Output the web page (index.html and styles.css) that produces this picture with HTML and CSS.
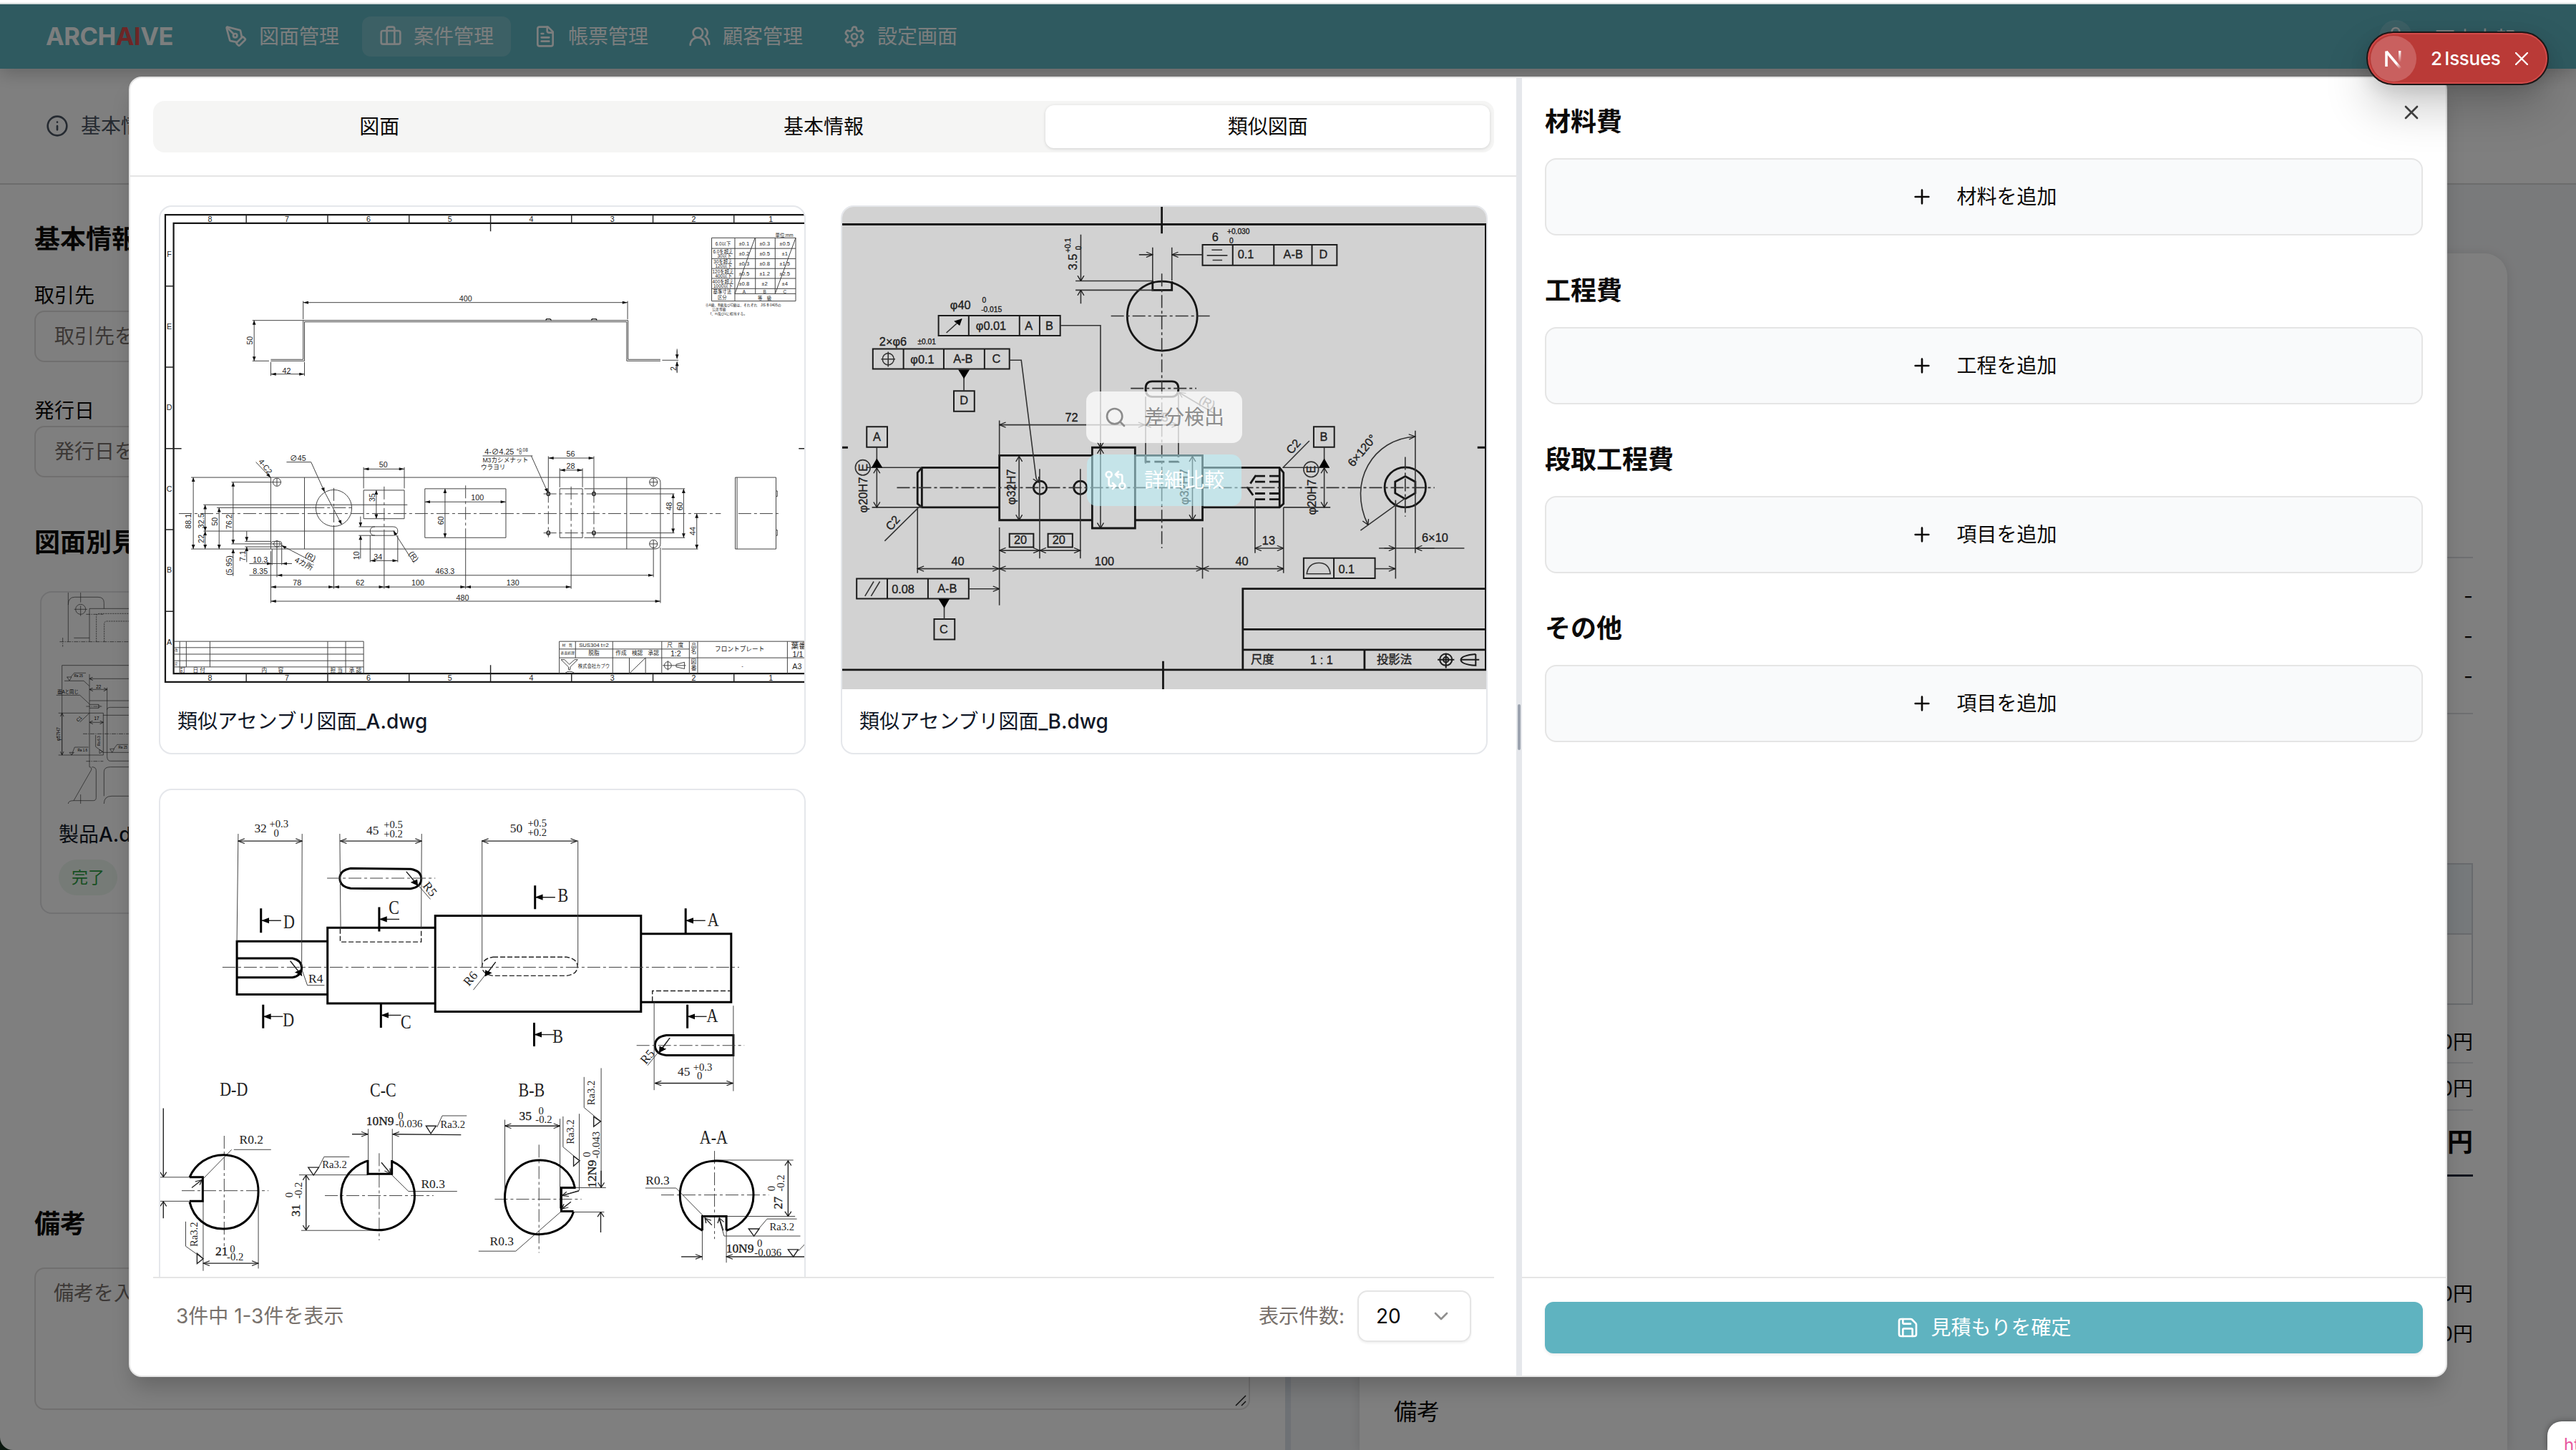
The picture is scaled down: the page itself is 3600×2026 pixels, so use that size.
FILE: index.html
```html
<!DOCTYPE html>
<html lang="ja">
<head>
<meta charset="utf-8">
<title>ARCHAIVE</title>
<link rel="stylesheet" href="styles.css">
</head>
<body>
<svg class="defs" width="0" height="0">
  <defs>
    <marker id="solid" viewBox="0 0 12 8" refX="12" refY="4" markerWidth="13" markerHeight="8" markerUnits="userSpaceOnUse" orient="auto-start-reverse"><path d="M0 0L12 4L0 8z" fill="#111"/></marker>
    <marker id="open" viewBox="0 0 14 14" refX="13" refY="7" markerWidth="17" markerHeight="17" markerUnits="userSpaceOnUse" orient="auto-start-reverse"><path d="M1 1L13 7L1 13" fill="none" stroke="#1a1a1a" stroke-width="1.8"/></marker>
    <marker id="block" viewBox="0 0 14 14" refX="13" refY="7" markerWidth="18" markerHeight="20" markerUnits="userSpaceOnUse" orient="auto-start-reverse"><path d="M0 0L14 7L0 14z" fill="#000"/></marker>
    <linearGradient id="fade" x1="0" y1="0" x2="0" y2="1"><stop offset="0" stop-color="#fff"/><stop offset="1" stop-color="#fff" stop-opacity="0"/></linearGradient>
    <linearGradient id="fade2" gradientUnits="userSpaceOnUse" x1="8" y1="4" x2="28" y2="28"><stop offset=".7" stop-color="#fff"/><stop offset="1" stop-color="#fff" stop-opacity="0"/></linearGradient>
  </defs>
</svg>

<div class="page">
  <header class="nav">
    <div class="logo">ARCH<span>AI</span>VE</div>
    <nav class="menu">
      <a class="menu-item"><svg class="icon" viewBox="0 0 24 24"><path d="M15.707 21.293a1 1 0 0 1-1.414 0l-1.586-1.586a1 1 0 0 1 0-1.414l5.586-5.586a1 1 0 0 1 1.414 0l1.586 1.586a1 1 0 0 1 0 1.414z"/><path d="m18 13-1.375-6.874a1 1 0 0 0-.746-.776L3.235 2.028a1 1 0 0 0-1.207 1.207L5.35 15.879a1 1 0 0 0 .776.746L13 18"/><path d="m2.3 2.3 7.286 7.286"/><circle cx="11" cy="11" r="2"/></svg>図面管理</a>
      <a class="menu-item active"><svg class="icon" viewBox="0 0 24 24"><path d="M16 20V4a2 2 0 0 0-2-2h-4a2 2 0 0 0-2 2v16"/><rect width="20" height="14" x="2" y="6" rx="2"/></svg>案件管理</a>
      <a class="menu-item"><svg class="icon" viewBox="0 0 24 24"><path d="M15 2H6a2 2 0 0 0-2 2v16a2 2 0 0 0 2 2h12a2 2 0 0 0 2-2V7Z"/><path d="M14 2v4a2 2 0 0 0 2 2h4M10 9H8M16 13H8M16 17H8"/></svg>帳票管理</a>
      <a class="menu-item"><svg class="icon" viewBox="0 0 24 24"><path d="M18 21a8 8 0 0 0-16 0"/><circle cx="10" cy="8" r="5"/><path d="M22 20c0-3.370-2-6.500-4-8a5 5 0 0 0-.450-8.300"/></svg>顧客管理</a>
      <a class="menu-item"><svg class="icon" viewBox="0 0 24 24"><path d="M12.220 2h-.440a2 2 0 0 0-2 2v.180a2 2 0 0 1-1 1.730l-.430.250a2 2 0 0 1-2 0l-.150-.080a2 2 0 0 0-2.730.730l-.220.380a2 2 0 0 0 .730 2.730l.150.100a2 2 0 0 1 1 1.720v.510a2 2 0 0 1-1 1.740l-.150.090a2 2 0 0 0-.730 2.730l.220.380a2 2 0 0 0 2.730.730l.150-.080a2 2 0 0 1 2 0l.430.250a2 2 0 0 1 1 1.730V20a2 2 0 0 0 2 2h.440a2 2 0 0 0 2-2v-.180a2 2 0 0 1 1-1.730l.430-.250a2 2 0 0 1 2 0l.150.080a2 2 0 0 0 2.730-.730l.220-.390a2 2 0 0 0-.730-2.730l-.150-.080a2 2 0 0 1-1-1.740v-.500a2 2 0 0 1 1-1.740l.150-.090a2 2 0 0 0 .730-2.730l-.220-.380a2 2 0 0 0-2.730-.730l-.150.080a2 2 0 0 1-2 0l-.430-.250a2 2 0 0 1-1-1.730V4a2 2 0 0 0-2-2z"/><circle cx="12" cy="12" r="3"/></svg>設定画面</a>
    </nav>
    <div class="user"><span class="avatar"><svg class="icon" viewBox="0 0 24 24"><path d="M19 21v-2a4 4 0 0 0-4-4H9a4 4 0 0 0-4 4v2"/><circle cx="12" cy="7" r="4"/></svg></span><span class="user-name">西山太郎</span></div>
  </header>
  <div class="subnav"><svg class="icon" viewBox="0 0 24 24"><circle cx="12" cy="12" r="10"/><path d="M12 16v-4M12 8h.01"/></svg>基本情報</div>
  <div class="work">
    <section class="form">
      <h2>基本情報</h2>
      <label>取引先</label>
      <div class="input">取引先を</div>
      <label class="second">発行日</label>
      <div class="input">発行日を</div>
      <h2 class="per">図面別見積</h2>
      <article class="part">
        <svg class="part-draw" viewBox="51 39 420 885">
          <path d="M163 39V245M163 90Q163 58 190 58H288Q313 58 313 82V106M215 39V80M215 94V137M188 109H243M252 245V106H430M187 229H252M137 344V720M137 344H430M252 381V770M252 492H430M122 544H310V720H122M310 553H430M326 437V725Q326 745 340 745H430M326 530Q326 520 340 520H430M147 409H228L252 431M113 469H212L252 506M212 582L252 544M177 720L190 687H248M158 393H177L168 408zM160 393H158M174 393L188 376H237M168 709H187L177 720zM338 694H356L347 709zM354 694L368 676H413M310 709H430M278 636V685L310 709M294 697V713L308 706zM252 508H290V523H252M290 508L298 516L290 523M252 770Q262 770 260 782L186 911H268Q280 911 280 898V785Q280 770 262 770M163 924Q163 911 186 911M215 885V924M313 924Q313 892 345 892H430M313 892V790Q313 770 340 770H430" class="hair"/>
          <circle cx="215" cy="109" r="21" class="hair"/>
          <path d="M127 245H430M140 228V266M225 631H430M238 516H304M238 746H310M238 130H310" class="hair dash-c"/>
          <path d="M281 245V140Q281 127 294 127H430M314 245V170Q314 159 326 159H430" class="hair dash"/>
          <g class="hair" marker-start="url(#open)" marker-end="url(#open)"><path d="M137 544V720"/><path d="M252 445H326"/><path d="M252 583H310"/></g>
          <path d="M430 400H252" class="hair" marker-end="url(#open)"/>
          <g class="part-text"><text x="290" y="432">22</text><text x="282" y="566">17</text><text x="162" y="455">面Aと同じ</text><text class="tiny" x="206" y="389">Ra 25</text><text class="tiny" x="223" y="699">Ra 1.6</text><text class="tiny" x="392" y="688">Ra 25</text><text class="turn" x="121" y="630">φ57H7</text><text class="turn tiny" x="293" y="660">Ra 6.3</text><text class="lean" x="208" y="567">C1</text></g>
        </svg>
        <div class="part-name">製品<b>A.dwg</b></div>
        <span class="badge">完了</span>
      </article>
      <h2 class="memo">備考</h2>
      <div class="textarea">備考を入<svg viewBox="0 0 16 16"><path d="M1 15L15 1M9 15L15 9"/></svg></div>
    </section>
    <div class="splitter"></div>
    <section class="preview">
      <div class="sheet">
        <div class="dashes"><span>-</span><span>-</span><span>-</span></div>
        <div class="grid-table"><div></div><div></div></div>
        <div class="sum">0円</div>
        <div class="sum">0円</div>
        <div class="sum total">0円</div>
        <div class="extra"><span>0円</span><span>0円</span></div>
        <div class="sheet-memo">備考</div>
      </div>
    </section>
  </div>
</div>

<div class="veil"></div>

<div class="dialog">
  <section class="left">
    <div class="tab-head">
      <div class="tabs"><div class="tab">図面</div><div class="tab">基本情報</div><div class="tab on">類似図面</div></div>
    </div>
    <div class="scroll">
      <div class="cards">
        <article class="card">
          <svg class="draw wide" viewBox="39.6 37 1471 1321" preserveAspectRatio="none">
            <path class="bold" d="M1520 59H51V1338H1520M1520 82H70V1315H1520"/>
            <path class="mid" d="M236 59V82M422 59V82M608 59V82M794 59V104M979 59V82M1165 59V82M1350 59V82M236 1315V1338M422 1315V1338M608 1315V1338M794 1292V1338M979 1315V1338M1165 1315V1338M1350 1315V1338M51 254H70M51 476H70M51 699H88M51 921H70M51 1145H70M1498 699H1520"/>
            <path class="thin" d="M1299 122H1491V295H1299zM1299 151H1491M1299 179H1491M1299 206H1491M1299 233H1491M1299 261H1491M1352 275H1491M1352 122V295M1399 122V275M1444 122V275M1398 122L1352 275M1491 122L1444 275"/>
            <path class="thin" d="M292 455H366V348H1108V455H1182M292 459H369V352H1105V459H1182"/>
            <path class="mid" d="M920 348L922 344H930L933 348M1024 348L1026 344H1035L1037 348"/>
            <path class="thin" d="M366 345V295M1107 345V295M250 348H366M250 459H288M292 462V500M369 462V500M1186 457H1223M1220 426V452M1220 492V462M110 778H1168Q1182 778 1182 792V960Q1182 974 1168 974H292V778M369 778V974M1105 778V974M504 813H597V891H504zM644 809H829V943H644zM952 809H1004V943H952zM530 913H571Q582 913 582 925Q582 937 571 937H530Q519 937 519 925Q519 913 530 913zM504 808V750M597 808V750M138 853H604M169 861H385M138 925H576M202 791H298M110 974H292M202 960H298M233 953H292M233 968H292M295 974V1018M317 960V1018M292 980V1122M306 968V1051M436 915V1083M551 940V1083M737 945V1083M978 945V1083M1166 968V1051M1182 970V1122M519 937V1010M582 937V1010M493 913H530M493 937H530M926 818V720M1030 818V720M952 805V753M1004 805V753M1036 823H1214M1036 930H1214M1008 809H1238M1008 943H1238M1185 974H1268M1353 778H1446V974H1353zM1357 778V974M1446 815H1449V830H1446M1446 922H1449V937H1446M328 736H384M776 719H890M243 1046H306M243 1014H340M292 960Q292 953 300 953H312Q317 953 317 960Q317 968 312 968H292"/>
            <path class="thin dash-c" d="M82 877H1320M1360 877H1455M385 861H482M436 807V915M551 803V940M737 800V943M978 803V943M926 812V942M1030 812V942M915 823H1036M915 930H1036M297 791H316M297 960H316M1157 791H1176M1157 960H1176M1166 781V801M1166 950V970M306 781V801M306 950V970"/>
            <ellipse class="thin" cx="436" cy="862" rx="41" ry="50"/>
            <g class="thin"><ellipse cx="306" cy="791" rx="9" ry="11"/><ellipse cx="306" cy="960" rx="7" ry="8"/><ellipse cx="1166" cy="791" rx="9" ry="11"/><ellipse cx="1166" cy="960" rx="9" ry="11"/></g>
            <g class="mid"><ellipse cx="926" cy="823" rx="3.5" ry="5"/><ellipse cx="1030" cy="823" rx="3.5" ry="5"/><ellipse cx="926" cy="930" rx="3.5" ry="5"/><ellipse cx="1030" cy="930" rx="3.5" ry="5"/></g>
            <g class="thin" marker-start="url(#solid)" marker-end="url(#solid)"><path d="M366 299H1107"/><path d="M254 348V459"/><path d="M292 495H369"/><path d="M504 755H597"/><path d="M926 725H1030"/><path d="M952 758H1004"/><path d="M115 778V974"/><path d="M142 853V925"/><path d="M142 925V974"/><path d="M174 861V974"/><path d="M206 791V960"/><path d="M533 813V891"/><path d="M644 845H829"/><path d="M690 809V943"/><path d="M519 1006H582"/><path d="M306 1046H1166"/><path d="M292 1078H436"/><path d="M436 1078H551"/><path d="M551 1078H737"/><path d="M737 1078H978"/><path d="M292 1117H1182"/><path d="M1211 823V930"/><path d="M1235 809V943"/><path d="M1265 877V974"/></g>
            <g class="thin" marker-end="url(#solid)"><path d="M384 736L415 818"/><path d="M415 818L454 907"/><path d="M887 719L925 820"/><path d="M258 736L292 779"/><path d="M390 1010L316 964"/><path d="M619 1012L572 924"/><path d="M497 885V913"/><path d="M497 1000V937"/><path d="M237 925V953"/><path d="M237 1010V968"/><path d="M206 1048V974"/><path d="M280 1014H295"/><path d="M340 1014H317"/><path d="M1220 430V453"/><path d="M1220 490V461"/></g>
            <path class="thin" d="M70 1227H504V1315M70 1244H504M70 1262H504M70 1280H504M70 1297H504M84 1227V1315M99 1227V1297M153 1227V1297M422 1227V1315M463 1227V1315"/>
            <path class="thin" d="M1520 1227H951V1315M951 1248H1248M951 1272H1520M988 1227V1272M1073 1227V1315M1111 1272V1315M1148 1272V1315M1185 1227V1315M1248 1227V1315M1267 1227V1315M1472 1227V1315M1111 1315L1148 1272M1187 1293H1240M1199 1280V1306M1218 1290L1237 1284V1302L1218 1297z"/>
            <ellipse class="thin" cx="1199" cy="1293" rx="8" ry="10"/>
            <path class="thin" d="M955 1277L963 1277L974 1290L986 1277H993L976 1297V1304H972V1297zM964 1314Q974 1304 986 1314"/>
            <g class="lbl">
              <text x="153" y="70">8</text><text x="329" y="70">7</text><text x="515" y="70">6</text><text x="701" y="70">5</text><text x="887" y="70">4</text><text x="1072" y="70">3</text><text x="1258" y="70">2</text><text x="1434" y="70">1</text>
              <text x="153" y="1326">8</text><text x="329" y="1326">7</text><text x="515" y="1326">6</text><text x="701" y="1326">5</text><text x="887" y="1326">4</text><text x="1072" y="1326">3</text><text x="1258" y="1326">2</text><text x="1434" y="1326">1</text>
              <text x="60" y="166">F</text><text x="60" y="364">E</text><text x="60" y="586">D</text><text x="60" y="809">C</text><text x="60" y="1031">B</text><text x="60" y="1229">A</text>
              <text x="737" y="288">400</text><text x="328" y="485">42</text><text x="549" y="743">50</text><text x="977" y="714">56</text><text x="977" y="747">28</text><text x="764" y="833">100</text><text x="354" y="724">∅45</text><text x="814" y="707">4-∅4.25</text><text x="537" y="996">34</text><text x="268" y="1003">10.3</text><text x="268" y="1034">8.35</text><text x="690" y="1034">463.3</text><text x="352" y="1066">78</text><text x="496" y="1066">62</text><text x="628" y="1066">100</text><text x="845" y="1066">130</text><text x="730" y="1107">480</text>
              <text class="name" x="828" y="731">M3カシメナット</text><text class="name" x="800" y="751">ウラヨリ</text>
              <g class="v"><text x="244" y="403">50</text><text x="1211" y="480">2</text><text x="104" y="898">88.1</text><text x="132" y="897">32.5</text><text x="132" y="946">22</text><text x="164" y="899">50</text><text x="196" y="899">76.2</text><text x="523" y="833">35</text><text x="680" y="896">60</text><text x="1201" y="857">48</text><text x="1226" y="857">60</text><text x="1255" y="925">44</text><text x="487" y="992">10</text><text x="228" y="993">7.1</text><text x="196" y="1019">(5.95)</text></g>
              <text class="tilt" x="280" y="748">4-C2</text><text class="tilt2" x="368" y="1014">4カ所</text><text class="tilt2" x="383" y="994">(R)</text><text class="tilt" x="619" y="994">(R)</text>
            </g>
            <g class="sml">
              <text x="866" y="702">+0.08</text><text x="862" y="711">0</text>
              <text x="1465" y="114">単位:mm</text><text x="1325" y="138">6.0以下</text><text x="1325" y="160">6.0を超え</text><text x="1328" y="172">30以下</text><text x="1325" y="187">30を超え</text><text x="1326" y="199">120以下</text><text x="1325" y="214">120を超え</text><text x="1326" y="226">400以下</text><text x="1325" y="241">400を超え</text><text x="1325" y="254">1000以下</text><text x="1323" y="269">基準寸法</text><text x="1323" y="284">区分</text><text x="1373" y="269">A</text><text x="1420" y="269">B</text><text x="1466" y="269">C</text><text x="1420" y="286">等　級</text>
            </g>
            <g class="med">
              <text x="1373" y="138">±0.1</text><text x="1420" y="138">±0.3</text><text x="1466" y="138">±0.5</text><text x="1373" y="166">±0.2</text><text x="1420" y="166">±0.5</text><text x="1466" y="166">±1</text><text x="1373" y="192">±0.3</text><text x="1420" y="192">±0.8</text><text x="1466" y="192">±1.5</text><text x="1373" y="220">±0.5</text><text x="1420" y="220">±1.2</text><text x="1466" y="220">±2.5</text><text x="1373" y="247">±0.8</text><text x="1420" y="247">±2</text><text x="1466" y="247">±4</text>
              <text x="128" y="1307">日 付</text><text x="296" y="1307">内　　容</text><text x="442" y="1307">担 当</text><text x="485" y="1307">承 認</text><text x="91" y="1307">訂</text>
              <text x="1030" y="1238">SUS304 t=2</text><text x="1030" y="1260">脱脂</text><text x="1092" y="1260">作成</text><text x="1129" y="1260">検認</text><text x="1166" y="1260">承認</text><text x="1216" y="1238">尺　度</text><text class="firm" x="1030" y="1295">株式会社カブウ</text><text x="1258" y="1239">品</text><text x="1258" y="1256">名</text><text x="1258" y="1283">図</text><text x="1258" y="1301">番</text><text x="1369" y="1294">-</text>
            </g>
            <g class="tin"><text x="1371" y="307">※A級、B級及びC級は、それぞれ　JIS B 0405の</text><text x="1316" y="319">公差等級</text><text x="1338" y="330">f、m及びcに相当する。</text><text x="969" y="1238">材　質</text><text x="970" y="1260">表面処理</text><text x="76" y="1252">改</text><text x="76" y="1289">定</text></g>
            <g class="lbl"><text x="1217" y="1260">1:2</text><text class="name" x="1363" y="1248">フロントプレート</text><text x="1498" y="1239">葉番</text><text x="1496" y="1261">1/1</text><text x="1494" y="1295">A3</text></g>
          </svg>
          <div class="caption">類似アセンブリ図面<b>_A.dwg</b></div>
        </article>

        <article class="card hover">
          <svg class="draw wide blur" viewBox="27 37 1471 1321" preserveAspectRatio="none">
            <path class="bold" d="M20 85H1497V1305H20M757 30V110M760 1281V1370M20 696H40M1478 696H1498M1500 1083H942V1305M942 1194H1500M942 1250H1500M1220 1250V1305"/>
            <ellipse class="bold" cx="758" cy="336" rx="80" ry="95"/>
            <path class="bold" d="M736 241V265H780V241M386 751H209L199 765V850L209 860H386M209 751V860M386 718H598V895H386zM598 696H696V917H598zM696 718H850V895H696M850 751H1026L1035 765V850L1026 860H850M1026 751V860M735 515H780Q795 515 795 535Q795 557 780 557H735Q720 557 720 535Q720 515 735 515z"/>
            <path class="frame" d="M850 141H1157V197H850zM919 141V197M1013 141V197M1100 141V197M247 335H525V390H247zM316 335V390M432 335V390M478 335V390M97 426H409V481H97zM167 426V481M259 426V481M352 426V481M60 1055H316V1110H60zM130 1055V1110M223 1055V1110M1081 999H1244V1054H1081zM1150 999V1054M282 541H329V597H282zM83 639H130V695H83zM1104 639H1151V695H1104zM237 1166H284V1222H237zM409 932H464V969H409zM497 932H553V969H497z"/>
            <g class="bold"><ellipse cx="479" cy="806" rx="15" ry="18"/><ellipse cx="571" cy="806" rx="15" ry="18"/><ellipse cx="1313" cy="805" rx="47" ry="55"/></g>
            <path class="bold" d="M1313 775L1336 790V821L1313 837L1290 821V790z"/>
            <path class="bold seg" d="M970 774H1035M970 790H1035M970 822H1035M970 838H1035M972 772L953 806L972 838M720 720V735H795V720"/>
            <path class="thin g" d="M736 239V148M780 239V148M560 240H738M560 265H738M525 362H617V696M409 457H436L470 780M305 505V540M106 695V730M1128 695V730M260 1130V1166M83 751H209M95 860H209M1035 751H1140M1035 860H1142M199 860V1040M386 622V718M386 915V1128M478 755V1000M571 755V1000M850 915V1055M1035 860V1040M970 840V985M720 557V740M795 545V720M1336 650V985M1291 840V1055M124 952L206 855M1094 678L1033 752M1253 972H1448M860 170H907M871 155H895M873 183H895M1088 1042Q1092 1012 1116 1012Q1139 1012 1142 1042zM79 1103L99 1063M93 1103L113 1063M1211 923L1313 835M116 454H148M132 434V475"/>
            <g class="thin g"><ellipse cx="132" cy="454" rx="13" ry="16"/><ellipse cx="74" cy="751" rx="17" ry="21"/><ellipse cx="1098" cy="756" rx="17" ry="21"/></g>
            <path class="thin g dash-c" d="M641 336H868M757 220V972M686 534H836M152 806H1380M1313 722V885"/>
            <g class="thin g" marker-start="url(#open)" marker-end="url(#open)"><path d="M386 634H718"/><path d="M718 634H794"/><path d="M386 978H478"/><path d="M478 978H571"/><path d="M199 1028H385"/><path d="M386 1028H850"/><path d="M850 1028H1035"/><path d="M970 972H1035"/><path d="M431 720V895"/><path d="M617 698V917"/><path d="M827 720V895"/><path d="M106 752V860"/><path d="M1128 752V860"/><path d="M1336 666C1240 672 1180 790 1228 908"/></g>
            <g class="thin g" marker-end="url(#open)"><path d="M705 168H736"/><path d="M850 168H780"/><path d="M572 113V240"/><path d="M572 302V265"/><path d="M316 1083H386"/><path d="M1244 1028H1290"/><path d="M1265 972H1290"/><path d="M1380 972H1337"/><path d="M880 605L796 545"/><path d="M470 780L476 792"/><path d="M617 600V696"/></g>
            <path class="thin g" d="M265 382L300 344" marker-end="url(#block)"/>
            <path class="fill" d="M292 483H318L305 508zM94 751L106 726L119 751zM1116 751L1128 726L1140 751zM247 1111H272L260 1136z"/>
            <path class="frame" d="M1387 1277H1425M1406 1260V1300M1440 1277H1482M1474 1262V1293Q1440 1290 1440 1277Q1442 1265 1474 1262"/>
            <g class="frame"><ellipse cx="1406" cy="1277" rx="14" ry="16"/><ellipse cx="1406" cy="1277" rx="6" ry="7"/></g>
            <g class="lb2">
              <text x="879" y="120">6</text><text x="949" y="167">0.1</text><text x="1057" y="167">A-B</text><text x="1126" y="167">D</text><text x="297" y="305">φ40</text><text x="367" y="363">φ0.01</text><text x="453" y="362">A</text><text x="500" y="362">B</text><text x="143" y="405">2×φ6</text><text x="210" y="454">φ0.1</text><text x="303" y="453">A-B</text><text x="379" y="453">C</text><text x="305" y="567">D</text><text x="106" y="667">A</text><text x="1127" y="667">B</text><text x="551" y="614">72</text><text x="757" y="614">15</text><text x="434" y="948">20</text><text x="522" y="948">20</text><text x="291" y="1007">40</text><text x="626" y="1007">100</text><text x="940" y="1007">40</text><text x="1001" y="951">13</text><text x="1381" y="943">6×10</text><text x="1179" y="1028">0.1</text><text x="166" y="1084">0.08</text><text x="267" y="1082">A-B</text><text x="259" y="1194">C</text><text x="987" y="1276">尺度</text><text x="1122" y="1278">1 : 1</text><text x="1288" y="1276">投影法</text>
              <g class="v"><text x="554" y="188">3.5</text><text x="412" y="804">φ32H7</text><text x="808" y="804">φ32H7</text><text x="74" y="826">φ20H7</text><text x="74" y="751">E</text><text x="1098" y="756">E</text><text x="1100" y="832">φ20H7</text></g>
              <text class="up" x="142" y="902">C2</text><text class="up" x="1057" y="693">C2</text><text class="up" x="1214" y="704">6×120°</text><text class="tilt2" x="861" y="572">(R)</text>
            </g>
            <g class="med"><text x="932" y="104">+0.030</text><text x="916" y="131">0</text><text x="351" y="292">0</text><text x="368" y="319">-0.015</text><text x="220" y="407">±0.01</text><g class="v"><text x="543" y="142">+0.1</text><text x="567" y="149">0</text></g></g>
          </svg>
          <div class="shade">
            <button class="act light"><svg class="icon" viewBox="0 0 24 24"><circle cx="11" cy="11" r="8"/><path d="m21 21-4.300-4.300"/></svg>差分検出</button>
            <button class="act teal"><svg class="icon" viewBox="0 0 24 24"><circle cx="5" cy="6" r="3"/><path d="M12 6h5a2 2 0 0 1 2 2v7"/><path d="m15 9-3-3 3-3"/><circle cx="19" cy="18" r="3"/><path d="M12 18H7a2 2 0 0 1-2-2V9"/><path d="m9 15 3 3-3 3"/></svg>詳細比較</button>
          </div>
          <div class="caption">類似アセンブリ図面<b>_B.dwg</b></div>
        </article>

        <article class="card">
          <svg class="draw tall" viewBox="40 52 1471 1468" preserveAspectRatio="none">
            <path class="heavy" d="M422 512H215V674H422M215 564H342Q363 570 363 593Q363 616 342 622H215M422 471H668V701H422zM668 434H1138V726H668zM1138 489H1344V697H1138M475 290L612 292Q637 298 636 322Q637 346 612 352L475 351Q450 346 450 320Q450 296 475 290zM1349 798H1196Q1170 803 1170 829Q1170 855 1196 859H1349z"/>
            <path class="heavy" d="M270 412V486M275 705V777M540 408V482M544 703V775M896 342V414M894 760V832M1240 412V488M1244 705V777"/>
            <path class="mid dash" d="M451 474V514H636V474M800 560H968Q993 565 993 589Q993 612 968 617H800Q775 612 775 589Q775 565 800 560M1164 695V663H1344"/>
            <path class="thin dash-c" d="M182 591H1362M421 320H668M1128 829H1374M89 1271H287M186 1104V1440M416 1286H664M540 1157V1422M804 1297H1002M905 1131V1460M1184 1284H1430M1306 1150V1418"/>
            <path class="thin" d="M218 185L215 512M364 185L363 590M450 185L452 471M637 185L636 471M775 205V585M994 205V585M1168 697V965M1349 708V968M364 600L376 646H415M337 572L364 618M602 300L657 384M806 575L755 660M1204 806L1153 890M208 1146H293M203 1146L137 1236M40 1230H108M40 1303H108M138 1305V1515M264 1280V1508M515 1083V1180M570 1083V1180M357 1223H515M362 1392H540M568 1222L607 1273H718M827 1055V1290M953 1052V1325M955 1335L852 1455H767M960 1045V1138L998 1180M997 1037V1270L960 1285M1008 925V1018L1046 1060M1047 898V1260M985 1262H1058M985 1336H1054M1306 1178H1486M1330 1349H1490M1278 1355V1482M1333 1355V1490M1148 1263H1218L1282 1350M1316 1355L1328 1409H1502M402 1200L414 1168H472M672 1078L684 1043H740M1405 1390L1426 1357H1494M1497 1455L1515 1430M98 1365V1440L138 1478"/>
            <path class="mid" d="M378 1200H402L390 1224zM647 1074H670L658 1097zM1384 1387H1408L1396 1409zM1474 1450H1497L1486 1472zM1030 1046V1076L1046 1060zM984 1166V1196L998 1180zM124 1462V1493L138 1478z"/>
            <path class="heavy" d="M107 1230C120 1190 150 1162 184 1162C230 1162 264 1210 264 1274C264 1340 230 1387 184 1387C145 1387 116 1355 107 1305M107 1230H137V1303H107M514 1180C478 1195 453 1235 453 1286C453 1345 490 1391 537 1391C584 1391 621 1345 621 1286C621 1240 600 1200 570 1182M514 1178V1220H569V1178M987 1262C980 1215 948 1178 906 1178C860 1178 827 1230 827 1292C827 1352 860 1404 905 1404C945 1402 975 1375 984 1335M989 1262H956V1334H984M1278 1392C1245 1370 1227 1330 1227 1284C1227 1225 1262 1180 1311 1180C1360 1180 1395 1225 1395 1284C1395 1335 1370 1378 1333 1392M1278 1392V1349H1333V1392"/>
            <g class="mid" marker-start="url(#open)" marker-end="url(#open)"><path d="M218 207H364"/><path d="M451 207H637"/><path d="M775 207H992"/><path d="M1170 944H1348"/><path d="M138 1492H264"/><path d="M373 1224V1391"/><path d="M827 1074H953"/><path d="M1474 1180V1349"/></g>
            <g class="mid" marker-end="url(#open)"><path d="M47 1020V1229"/><path d="M47 1355V1304"/><path d="M478 1099H514"/><path d="M727 1101L571 1099"/><path d="M1047 1210V1261"/><path d="M1046 1398V1336"/><path d="M1230 1472H1277"/><path d="M1515 1472H1333"/><path d="M112 1262L135 1238"/><path d="M545 1185L566 1219"/><path d="M996 1272L957 1286"/><path d="M978 1305L957 1327"/><path d="M1300 1376L1284 1354"/><path d="M1326 1392L1317 1354"/></g>
            <g class="mid" marker-end="url(#block)"><path d="M316 449H272"/><path d="M320 741H276"/><path d="M586 445H541"/><path d="M590 737H545"/><path d="M942 378H897"/><path d="M940 796H895"/><path d="M1285 449H1241"/><path d="M1288 741H1245"/><path d="M337 572L363 616"/><path d="M602 300L628 342"/><path d="M806 575L782 618"/><path d="M1204 806L1180 850"/></g>
            <g class="big"><text x="334" y="451">D</text><text x="333" y="751">D</text><text x="574" y="408">C</text><text x="601" y="757">C</text><text x="960" y="371">B</text><text x="948" y="801">B</text><text x="1303" y="445">A</text><text x="1301" y="738">A</text><text x="208" y="962">D-D</text><text x="549" y="963">C-C</text><text x="888" y="963">B-B</text><text x="1304" y="1108">A-A</text></g>
            <g class="num"><text x="269" y="167">32</text><text x="525" y="173">45</text><text x="853" y="168">50</text><text x="1236" y="907">45</text><text x="395" y="625">R4</text><text x="248" y="1115">R0.2</text><text x="663" y="1251">R0.3</text><text x="820" y="1424">R0.3</text><text x="1176" y="1238">R0.3</text><text class="up" x="748" y="625">R6</text><text class="up" x="1152" y="863">R5</text><text class="tilt" x="656" y="353">R5</text></g>
            <g class="num dark"><text x="542" y="1059">10N9</text><text x="180" y="1455">21</text><text x="874" y="1044">35</text><text x="1364" y="1446">10N9</text><g class="v"><text x="349" y="1331">31</text><text x="1026" y="1220">12N9</text><text x="1450" y="1308">27</text></g></g>
            <g class="tol"><text x="311" y="155">+0.3</text><text x="305" y="182">0</text><text x="572" y="157">+0.5</text><text x="572" y="185">+0.2</text><text x="901" y="153">+0.5</text><text x="901" y="181">+0.2</text><text x="1279" y="896">+0.3</text><text x="1272" y="922">0</text><text x="589" y="1043">0</text><text x="608" y="1067">-0.036</text><text x="205" y="1449">0</text><text x="211" y="1472">-0.2</text><text x="910" y="1027">0</text><text x="916" y="1053">-0.2</text><text x="1409" y="1431">0</text><text x="1428" y="1458">-0.036</text><text x="708" y="1069">Ra3.2</text><text x="438" y="1192">Ra3.2</text><text x="1460" y="1381">Ra3.2</text><g class="v"><text x="1024" y="973">Ra3.2</text><text x="976" y="1092">Ra3.2</text><text x="117" y="1404">Ra3.2</text><text x="335" y="1284">0</text><text x="356" y="1270">-0.2</text><text x="1014" y="1161">0</text><text x="1035" y="1132">-0.043</text><text x="1436" y="1264">0</text><text x="1457" y="1248">-0.2</text></g></g>
          </svg>
          <div class="caption"></div>
        </article>
      </div>
    </div>
    <div class="pager">
      <span>3件中 1-3件を表示</span>
      <div class="per-page"><span>表示件数:</span><div class="select">20<svg class="icon" viewBox="0 0 24 24"><path d="m6 9 6 6 6-6"/></svg></div></div>
    </div>
  </section>
  <div class="divider"><div class="grip"></div></div>
  <section class="right">
    <div class="costs">
      <div class="cost"><h3>材料費</h3><button class="add"><svg class="icon" viewBox="0 0 24 24"><path d="M5 12h14M12 5v14"/></svg>材料を追加</button></div>
      <div class="cost"><h3>工程費</h3><button class="add"><svg class="icon" viewBox="0 0 24 24"><path d="M5 12h14M12 5v14"/></svg>工程を追加</button></div>
      <div class="cost"><h3>段取工程費</h3><button class="add"><svg class="icon" viewBox="0 0 24 24"><path d="M5 12h14M12 5v14"/></svg>項目を追加</button></div>
      <div class="cost"><h3>その他</h3><button class="add"><svg class="icon" viewBox="0 0 24 24"><path d="M5 12h14M12 5v14"/></svg>項目を追加</button></div>
    </div>
    <div class="confirm"><button class="primary"><svg class="icon" viewBox="0 0 24 24"><path d="M15.200 3a2 2 0 0 1 1.400.600l3.800 3.800a2 2 0 0 1 .600 1.400V19a2 2 0 0 1-2 2H5a2 2 0 0 1-2-2V5a2 2 0 0 1 2-2z"/><path d="M17 21v-7a1 1 0 0 0-1-1H8a1 1 0 0 0-1 1v7M7 3v4a1 1 0 0 0 1 1h7"/></svg>見積もりを確定</button></div>
  </section>
  <svg class="icon close" viewBox="0 0 24 24"><path d="M18 6 6 18M6 6l12 12"/></svg>
</div>

<div class="issues">
  <span class="mark"><svg viewBox="0 0 32 32"><path d="M6 5.500V27" stroke="#fff" stroke-width="3.600"/><path d="M6 6L27 31" stroke="url(#fade2)" stroke-width="3.600"/><rect x="23" y="5" width="3.400" height="16" fill="url(#fade)"/></svg></span>
  <span class="issue-text">2 Issues</span>
  <svg class="x" viewBox="0 0 18 18"><path d="M1 1L17 17M17 1L1 17"/></svg>
</div>
<div class="popup">ht</div>
</body>
</html>
```
FILE: styles.css
```css
* { box-sizing: border-box; }
body {
  margin: 0;
  width: 3600px;
  height: 2026px;
  overflow: hidden;
  position: relative;
  background: linear-gradient(#fff 1900px, #16301f 1900px);
  color: #0c0a09;
  font: 28px/40px Inter, "Noto Sans CJK JP", sans-serif;
}
b { font-weight: 500; }
h2, h3 { margin: 0; font-size: 36px; line-height: 48px; font-weight: 700; }
button { font: inherit; color: inherit; margin: 0; }
.defs { position: absolute; }
.icon {
  width: 32px; height: 32px; flex: none;
  fill: none; stroke: currentColor; stroke-width: 2;
  stroke-linecap: round; stroke-linejoin: round;
}

/* page behind the dialog */
.page { height: 2026px; border-top: 4px solid #fff; background: #fff; border-radius: 0 0 0 18px; display: flex; flex-direction: column; overflow: hidden; }
.nav {
  height: 92px; flex: none; padding: 0 64px; position: relative;
  display: flex; align-items: center; gap: 48px;
  background: #5eb4c0; color: #fff; border-top: 2px solid #d9dfdf;
  box-shadow: 0 6px 24px rgba(0,0,0,.22);
}
.logo { width: 178px; font-size: 34.5px; font-weight: 700; letter-spacing: -.5px; color: #fff; }
.logo span { color: #e04848; }
.menu { display: flex; gap: 8px; }
.menu-item { height: 56px; padding: 0 24px; display: flex; align-items: center; gap: 16px; border-radius: 12px; }
.menu-item.active { background: rgba(255,255,255,.18); }
.menu, .user, .logo { opacity: .96; }
.user { margin-left: auto; width: 211px; display: flex; align-items: center; gap: 32px; }
.user-name { padding-top: 5px; }
.avatar { width: 46px; height: 46px; flex: none; border-radius: 50%; background: rgba(255,255,255,.18); display: flex; align-items: center; justify-content: center; }
.subnav { height: 162px; flex: none; padding: 0 64px; display: flex; align-items: center; gap: 17px; color: #4b5563; border-bottom: 2px solid #d8d8d8; }
.work { flex: 1; display: flex; min-height: 0; }
.form { width: 1796px; padding: 52px 49px 0 48px; display: flex; flex-direction: column; }
.form label { margin-top: 35px; line-height: 40px; }
.input { height: 72px; margin-top: 1px; padding: 0 26px; display: flex; align-items: center; border: 2px solid #e1dfde; border-radius: 14px; color: #78716c; }
.form .second { margin-top: 48px; }
.per { margin-top: 67px; }
.part { margin: 44px 0 0 8px; width: 600px; height: 451px; border: 2px solid #e2e2e4; border-radius: 16px; display: flex; flex-direction: column; align-items: flex-start; }
.part-draw { width: 140px; height: 295px; }
.part-name { margin: 23px 0 0 24px; color: #111827; }
.badge { margin: 15px 0 0 24px; height: 50px; padding: 0 18px; display: flex; align-items: center; border-radius: 25px; background: #ecf6ee; color: #2f9e44; font-size: 23px; }
.memo { margin-top: 409px; }
.textarea { margin-top: 37px; height: 199px; padding: 14px 25px; border: 2px solid #e1dfde; border-radius: 14px; color: #78716c; position: relative; }
.textarea svg { position: absolute; right: 3px; bottom: 3px; width: 16px; height: 16px; fill: none; stroke: #222; stroke-width: 1.5; }
.splitter { width: 8px; background: #dde3ea; }
.preview { flex: 1; padding: 96px 96px 0; background: #f3f4f6; display: flex; }
.sheet { flex: 1; padding: 424px 48px 0; background: #fff; border-radius: 32px 32px 0 0; box-shadow: 0 2px 16px rgba(0,0,0,.12); display: flex; flex-direction: column; }
.dashes { height: 220px; border: solid #dcdfe3; border-width: 2px 0; padding-top: 33px; display: flex; flex-direction: column; align-items: flex-end; gap: 16px; }
.grid-table { margin-top: 208px; height: 198px; border: 2px solid #d1d5db; }
.grid-table div { height: 98px; }
.grid-table div:first-child { background: #edf2f6; border-bottom: 2px solid #d1d5db; }
.sum { height: 66px; padding-top: 15px; text-align: right; border-bottom: 2px solid #e2e4e8; }
.sum:nth-of-type(3) { height: 82px; padding-top: 32px; }
.total { height: 92px; padding-top: 20px; font-size: 36px; line-height: 48px; font-weight: 700; border-bottom: 3px solid #1e293b; }
.extra { margin-top: 144px; display: flex; flex-direction: column; align-items: flex-end; gap: 16px; }
.sheet-memo { margin-top: 69px; font-size: 32px; }
.veil { position: absolute; inset: 6px 0 0; background: rgba(0,0,0,.5); }

/* dialog */
.dialog {
  position: absolute; left: 180px; top: 107px; width: 3240px; height: 1817px;
  background: #fff; border: 2px solid #e5e5e5; border-radius: 18px;
  box-shadow: 0 20px 30px -6px rgba(0,0,0,.2);
  display: flex;
}
.left { width: 1937px; display: flex; flex-direction: column; }
.tab-head { padding: 32px 31px 32px 32px; border-bottom: 2px solid #e5e5e5; }
.tabs { height: 72px; padding: 6px; display: flex; background: #f5f5f4; border-radius: 16px; }
.tab { flex: 1; display: flex; align-items: center; justify-content: center; border-radius: 12px; }
.tab.on { background: #fff; box-shadow: 0 1px 4px rgba(0,0,0,.15); }
.scroll { height: 1537px; overflow: hidden; padding: 40px 40px 0 40px; }
.cards { display: grid; grid-template-columns: 1fr 1fr; gap: 48px 49px; }
.card { height: 767px; border: 2px solid #e5e7eb; border-radius: 18px; overflow: hidden; position: relative; display: flex; flex-direction: column; }
.hover .draw { background: #d2d2d2; }
.draw { width: 100%; height: 674px; display: block; flex: none; }
.caption { padding: 25px 24px 0; color: #111827; }
.shade { position: absolute; inset: 0 0 88px; display: flex; flex-direction: column; gap: 16px; align-items: center; justify-content: center; }
.act { height: 72px; width: 218px; border: 0; border-radius: 14px; padding: 0; display: flex; align-items: center; justify-content: center; gap: 24px; }
.light { background: rgba(255,255,255,.74); color: #8c8c8c; }
.teal { background: rgba(186,242,252,.55); color: #fff; width: 216px; }
.pager { margin: 0 31px 0 32px; border-top: 2px solid #e5e5e5; padding: 17px 32px 0; display: flex; justify-content: space-between; align-items: center; color: #78716c; }
.per-page { display: flex; align-items: center; gap: 18px; }
.select { width: 159px; height: 72px; padding: 0 24px; display: flex; align-items: center; justify-content: space-between; border: 2px solid #e5e5e5; border-radius: 14px; color: #0c0a09; box-shadow: 0 2px 3px rgba(0,0,0,.06); }
.select .icon { opacity: .45; }
.divider { width: 8px; background: #e5e7eb; display: flex; align-items: center; justify-content: center; }
.grip { width: 4px; height: 64px; border-radius: 2px; background: #9ca3af; }
.right { flex: 1; display: flex; flex-direction: column; }
.costs { flex: 1; padding: 36px 32px 0; display: flex; flex-direction: column; gap: 52px; }
.cost { height: 184px; display: flex; flex-direction: column; justify-content: space-between; }
.cost h3 { padding-top: 1px; }
.add { height: 108px; display: flex; align-items: center; justify-content: center; gap: 32px; background: #f9fafb; border: 2px solid #e5e5e5; border-radius: 16px; }
.confirm { height: 138px; padding: 33px 32px; border-top: 2px solid #e5e5e5; }
.primary { width: 100%; height: 72px; display: flex; align-items: center; justify-content: center; gap: 16px; background: #5fb3c0; color: #fff; border: 0; border-radius: 12px; box-shadow: 0 2px 4px rgba(0,0,0,.08); }
.close { position: absolute; right: 32px; top: 32px; color: #444; }

/* floating items */
.issues { position: absolute; left: 3307px; top: 44px; width: 255px; height: 75px; border: 2px solid #1c1717; border-radius: 38px; background: #ba3a37; box-shadow: inset 0 0 0 2px #d24a49, 0 32px 64px rgba(0,0,0,.2), 0 8px 24px rgba(0,0,0,.12); display: flex; align-items: center; padding-left: 4px; color: #fff; }
.mark { width: 64px; height: 64px; border-radius: 50%; background: #c9605f; display: flex; align-items: center; justify-content: center; }
.mark svg { width: 32px; height: 32px; fill: none; }
.issue-text { margin-left: 20px; width: 99px; font-size: 26px; font-weight: 500; letter-spacing: -.3px; word-spacing: -3px; white-space: nowrap; }
.x { margin-left: 19px; width: 18px; height: 18px; fill: none; stroke: #fff; stroke-width: 2.4; stroke-linecap: round; }
.popup { position: absolute; left: 3560px; top: 1986px; width: 40px; height: 40px; overflow: hidden; padding: 13px 0 0 23px; background: #fff; color: #e85aa0; font-size: 24px; border-radius: 20px 0 0 0; box-shadow: 0 0 8px rgba(0,0,0,.4); }

/* technical drawings; strokes stay in screen pixels */
.draw path, .draw ellipse { vector-effect: non-scaling-stroke; fill: none; }
.thin { stroke: #444; stroke-width: 1; }
.mid { stroke: #222; stroke-width: 1.4; }
.bold { stroke: #161616; stroke-width: 2.2; }
.blur .bold { stroke-width: 2.8; }
.frame { stroke: #1c1c1c; stroke-width: 2; }
.heavy { stroke: #000; stroke-width: 3; }
.g { stroke: #333; stroke-width: 1.6; }
.draw .fill { fill: #000; }
.dash { stroke-dasharray: 7 3; }
.seg { stroke-dasharray: 14 6; }
.dash-c { stroke-dasharray: 18 4 4 4; }
.draw text { text-anchor: middle; dominant-baseline: central; fill: #222; font-family: "Liberation Sans", "Noto Sans CJK JP", sans-serif; transform-box: fill-box; transform-origin: center; }
.wide text { transform: scaleX(.8333); }
.wide .v text { transform: scaleX(.8333) rotate(-90deg); }
.wide .tilt { transform: scaleX(.8333) rotate(52deg); }
.wide .tilt2 { transform: scaleX(.8333) rotate(28deg); }
.wide .up { transform: scaleX(.8333) rotate(-50deg); }
.lbl { font-size: 21px; }
.med { font-size: 15px; }
.firm { font-size: 12.5px; }
.sml { font-size: 12.5px; }
.tin { font-size: 9.5px; }
.name { font-size: 17px; }
.lb2 { font-size: 32px; }
.blur text { stroke: #222; stroke-width: .7; }
.blur .med { font-size: 20px; }
.tall text { transform: scaleX(.75); font-family: "Liberation Serif", serif; }
.tall .v text { transform: scaleX(.75) rotate(-90deg); }
.tall .up { transform: scaleX(.75) rotate(-50deg); }
.tall .tilt { transform: scaleX(.75) rotate(52deg); }
.tall .big text { font-size: 60px; transform: scaleX(.6); }
.num { font-size: 38px; }
.num.dark { stroke: #222; stroke-width: .8; }
.tol { font-size: 32px; }
.hair { fill: none; stroke: #333; stroke-width: 2; }
.part-text { font: 19px "Liberation Sans", "Noto Sans CJK JP", sans-serif; }
.part-text text { text-anchor: middle; dominant-baseline: central; transform-box: fill-box; transform-origin: center; }
.part-text .tiny { font-size: 14px; }
.part-text .turn { transform: rotate(-90deg); }
.part-text .lean { transform: rotate(-45deg); }
```
